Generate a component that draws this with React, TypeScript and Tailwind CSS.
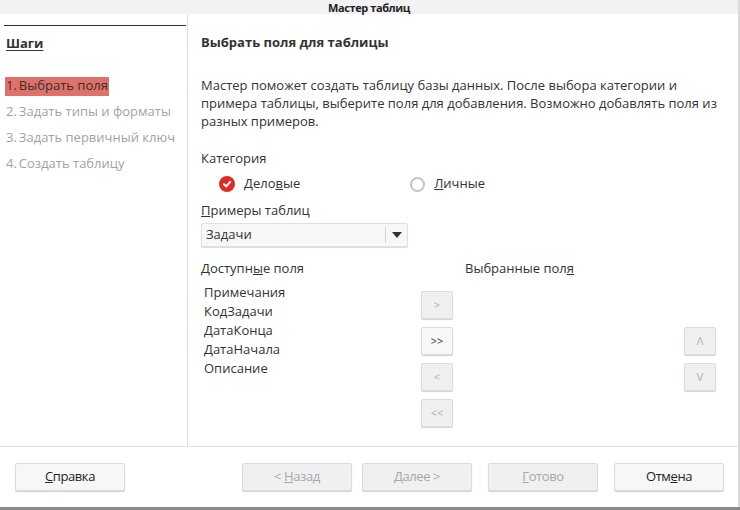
import React from 'react';

const font = { fontFamily: '"Open Sans", "Noto Sans", sans-serif' };

const steps = [
  { label: 'Выбрать поля', active: true },
  { label: 'Задать типы и форматы', active: false },
  { label: 'Задать первичный ключ', active: false },
  { label: 'Создать таблицу', active: false },
];

const fields = ['Примечания', 'КодЗадачи', 'ДатаКонца', 'ДатаНачала', 'Описание'];

const SmallButton: React.FC<{ label: string; enabled?: boolean }> = ({ label, enabled = false }) => (
  <div
    className={`w-[32px] h-[28px] flex items-center justify-center rounded-[2px] text-[11px] border border-[#dcdcdc] shadow-[0_1px_1px_rgba(0,0,0,0.18)] ${
      enabled ? 'bg-[#f7f7f7] text-[#333]' : 'bg-[#eff0f1] text-[#b0b0b0]'
    }`}
  >
    {label}
  </div>
);

const FooterButton: React.FC<{ children: React.ReactNode; enabled?: boolean }> = ({ children, enabled = true }) => (
  <div
    className={`w-[110px] h-[28px] flex items-center justify-center rounded-[2px] text-[13px] tracking-[-0.4px] border border-[#dcdcdc] shadow-[0_1px_1px_rgba(0,0,0,0.18)] ${
      enabled ? 'bg-[#f7f7f7] text-[#222]' : 'bg-[#eff0f1] text-[#a8a8a8]'
    }`}
  >
    {children}
  </div>
);

export default function App() {
  return (
    <div className="w-[740px] h-[510px] bg-[#8a8a8a] overflow-hidden" style={font}>
      <div className="w-[740px] h-[507px] flex flex-col bg-white border-r-2 border-[#dadada]">
        {/* title bar */}
        <div className="h-[14px] bg-[#f2f2f2] flex items-center justify-center text-[11px] font-bold text-[#222] tracking-[-0.4px] leading-none">
          Мастер таблиц
        </div>

        <div className="flex flex-1 min-h-0">
          {/* sidebar */}
          <div className="w-[188px] border-r border-[#e2e2e2] pt-[11px]">
            <div className="ml-[4px] w-[182px] h-[1px] bg-[#333]" />
            <div className="ml-[6px] mt-[8px] text-[13px] font-bold text-[#333] underline underline-offset-2">Шаги</div>
            <div className="mt-[23px] flex flex-col gap-[7px] text-[13px]">
              {steps.map((s, i) => (
                <div key={i} className="h-[19px] flex items-center">
                  <span
                    className={`ml-[5px] px-[1px] h-[19px] flex items-center ${
                      s.active ? 'bg-[#e0716a] text-[#333]' : 'text-[#a3a3a3]'
                    }`}
                  >
                    {i + 1}.<span className="ml-[2px]">{s.label}</span>
                  </span>
                </div>
              ))}
            </div>
          </div>

          {/* content */}
          <div className="flex-1 pl-[13px] pt-[19px] text-[13px] text-[#333]">
            <div className="font-bold leading-[18px]">Выбрать поля для таблицы</div>
            <p className="mt-[25px] leading-[18px] w-[520px]">
              Мастер поможет создать таблицу базы данных. После выбора категории и примера таблицы, выберите поля для добавления. Возможно добавлять поля из разных примеров.
            </p>
            <div className="mt-[19px] leading-[18px]">Категория</div>
            <div className="mt-[8px] flex items-center h-[18px]">
              <div className="ml-[18px] w-[16px] h-[16px] rounded-full bg-[#da2c28] flex items-center justify-center">
                <svg width="10" height="10" viewBox="0 0 10 10">
                  <path d="M2 5.2 L4.2 7.4 L8.2 2.8" stroke="white" strokeWidth="2" fill="none" strokeLinecap="round" strokeLinejoin="round" />
                </svg>
              </div>
              <span className="ml-[9px]">
                Дело<span className="underline">в</span>ые
              </span>
              <div className="ml-[110px] w-[15px] h-[15px] rounded-full border-2 border-[#c4c4c4]" />
              <span className="ml-[9px]">
                <span className="underline">Л</span>ичные
              </span>
            </div>
            <div className="mt-[8px] leading-[18px]">
              <span className="underline">П</span>римеры таблиц
            </div>
            <div className="mt-[4px] w-[207px] h-[24px] flex items-center bg-[#f7f7f7] border border-[#e0e0e0] rounded-[2px] shadow-[0_1px_1px_rgba(0,0,0,0.15)]">
              <span className="flex-1 pl-[4px]">Задачи</span>
              <div className="w-[1px] h-[16px] bg-[#d4d4d4]" />
              <div className="w-[21px] flex items-center justify-center">
                <svg width="10" height="6" viewBox="0 0 10 6">
                  <path d="M0 0 H10 L5 6 Z" fill="#333" />
                </svg>
              </div>
            </div>

            <div className="mt-[12px] flex">
              <div className="w-[264px]">
                <div className="leading-[18px]">
                  Доступн<span className="underline">ы</span>е поля
                </div>
                <div className="flex">
                  <div className="mt-[6px] ml-[3px] w-[217px] flex flex-col leading-[19px]">
                    {fields.map((f) => (
                      <div key={f}>{f}</div>
                    ))}
                  </div>
                  <div className="mt-[14px] flex flex-col gap-[8px]">
                    <SmallButton label=">" />
                    <SmallButton label=">>" enabled />
                    <SmallButton label="<" />
                    <SmallButton label="<<" />
                  </div>
                </div>
              </div>
              <div className="flex-1">
                <div className="leading-[18px]">
                  Выбранные пол<span className="underline">я</span>
                </div>
                <div className="mt-[50px] ml-[219px] flex flex-col gap-[8px]">
                  <SmallButton label="Λ" />
                  <SmallButton label="V" />
                </div>
              </div>
            </div>
          </div>
        </div>

        {/* footer */}
        <div className="h-[61px] border-t border-[#e2e2e2] flex items-start pt-[16px] pl-[15px] pr-[14px]">
          <FooterButton>
            <span className="underline">С</span>правка
          </FooterButton>
          <div className="ml-[117px] flex gap-[10px]">
            <FooterButton enabled={false}>
              &lt;&nbsp;<span className="underline">Н</span>азад
            </FooterButton>
            <FooterButton enabled={false}>
              <span className="underline">Д</span>алее &gt;
            </FooterButton>
          </div>
          <div className="ml-[16px] flex gap-[16px]">
            <FooterButton enabled={false}>
              <span className="underline">Г</span>отово
            </FooterButton>
            <FooterButton>
              Отм<span className="underline">е</span>на
            </FooterButton>
          </div>
        </div>
      </div>
    </div>
  );
}
